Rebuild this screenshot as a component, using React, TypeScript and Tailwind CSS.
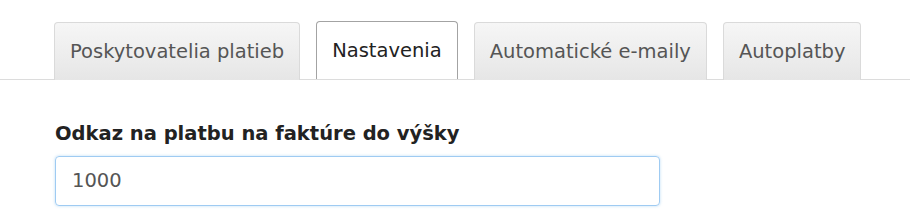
import { useState } from "react";
import clsx from "clsx";

const TABS = ["Poskytovatelia platieb", "Nastavenia", "Automatické e-maily", "Autoplatby"];

export default function App() {
  const [active, setActive] = useState(1);
  const [amount, setAmount] = useState("1000");

  return (
    <div className="w-[910px] h-[218px] bg-white overflow-hidden font-['DejaVu_Sans',Verdana,sans-serif]">
      <div className="pt-[21px] border-b border-[#dcdcdc]">
        <div className="pl-[54px] flex gap-4 -mb-px">
          {TABS.map((t, i) => (
            <button
              key={t}
              onClick={() => setActive(i)}
              className={clsx(
                "h-[58px] px-[15px] rounded-t-[4px] border border-b-0 text-[19.5px] leading-none",
                i === active
                  ? "bg-white border-[#a3a3a3] text-[#222]"
                  : "mt-px h-[57px] bg-gradient-to-b from-[#f6f6f6] to-[#e6e6e6] border-[#dadada] text-[#555]",
              )}
            >
              {t}
            </button>
          ))}
        </div>
      </div>

      <div className="pl-[55px] pt-[44px]">
        <label className="block text-[19.5px] font-bold text-[#222] leading-none">
          Odkaz na platbu na faktúre do výšky
        </label>
        <input
          value={amount}
          onChange={(e) => setAmount(e.target.value)}
          className="mt-[12px] w-[605px] h-[50px] px-4 rounded-[4px] border border-[#9fcbf2] shadow-[0_0_3px_rgba(102,175,233,0.45)] text-[19.5px] text-[#555] outline-none"
        />
      </div>
    </div>
  );
}
